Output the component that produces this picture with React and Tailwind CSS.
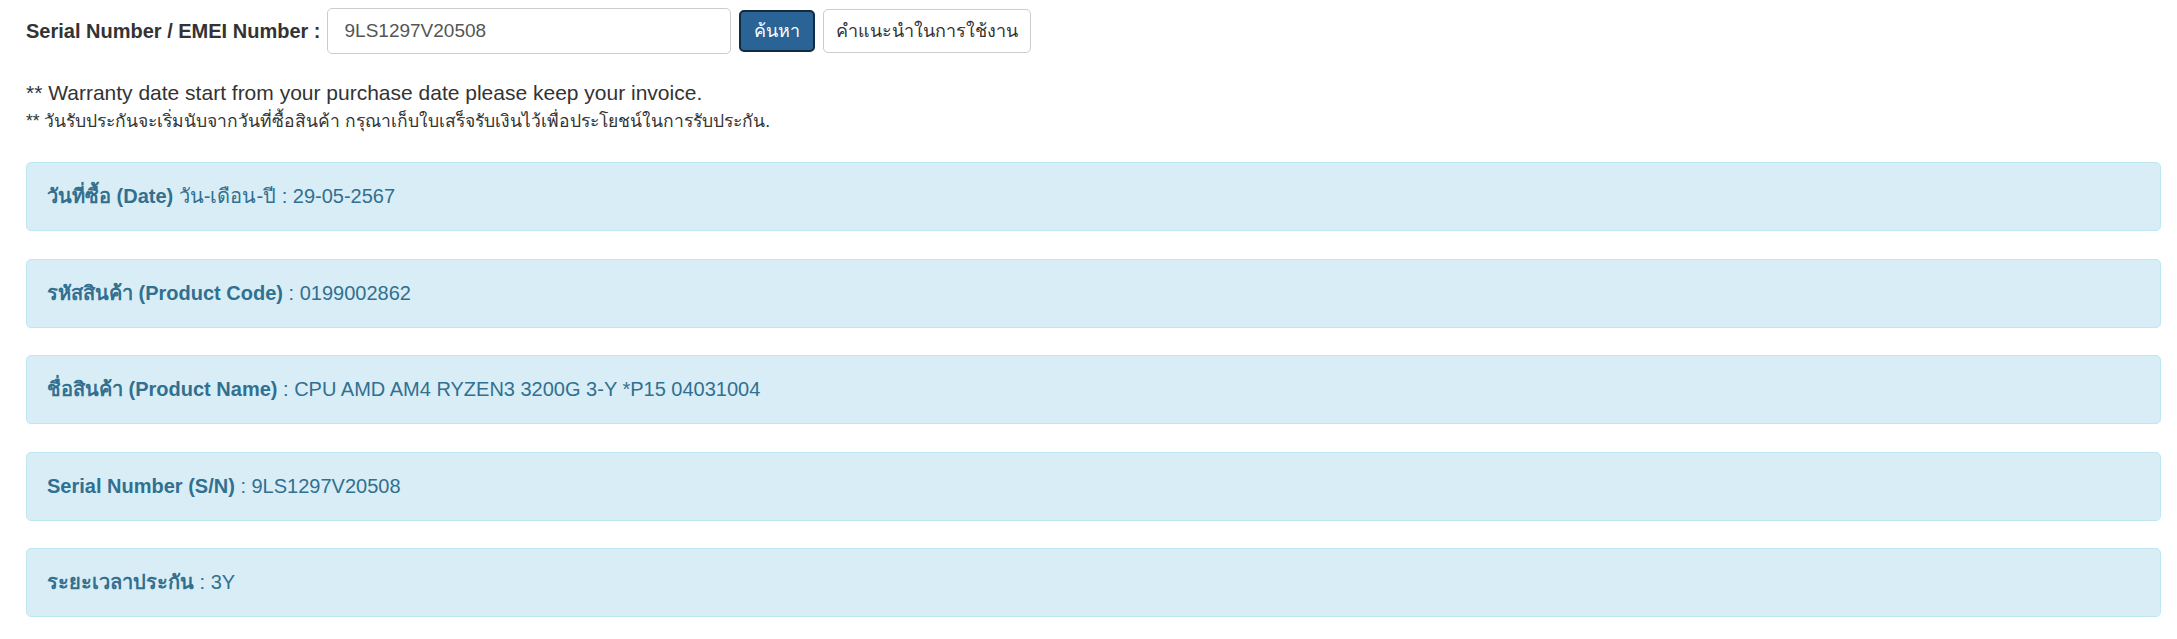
import React from 'react';

const rows = [
  { label: 'วันที่ซื้อ (Date)', extra: ' วัน-เดือน-ปี : ', value: '29-05-2567' },
  { label: 'รหัสสินค้า (Product Code)', extra: ' : ', value: '0199002862' },
  { label: 'ชื่อสินค้า (Product Name)', extra: ' : ', value: 'CPU AMD AM4 RYZEN3 3200G 3-Y *P15 04031004' },
  { label: 'Serial Number (S/N)', extra: ' : ', value: '9LS1297V20508' },
  { label: 'ระยะเวลาประกัน', extra: ' : ', value: '3Y' },
];

const App = () => {
  return (
    <div
      className="min-h-screen bg-white pl-[26px] pr-[16px] pt-[8px] text-[20px] leading-[27px] text-[#333]"
      style={{ fontFamily: '"Liberation Sans", "Noto Sans", sans-serif' }}
    >
      <div className="flex items-center">
        <label className="font-bold mr-[6px]">Serial Number / EMEI Number :</label>
        <input
          className="w-[404px] h-[46px] px-[17px] border border-[#ccc] rounded-[5px] text-[19px] text-[#555] outline-none"
          defaultValue="9LS1297V20508"
        />
        <button className="ml-[8px] h-[42px] px-[13px] bg-[#2a6496] border-2 border-[#122b40] rounded-[5px] text-white text-[18px]">
          ค้นหา
        </button>
        <button className="ml-[8px] h-[44px] px-[12px] bg-white border border-[#ccc] rounded-[5px] text-[#333] text-[18px]">
          คำแนะนำในการใช้งาน
        </button>
      </div>

      <div className="mt-[25px] leading-[28px]">
        <p className="text-[21px]">** Warranty date start from your purchase date please keep your invoice.</p>
        <p className="text-[17.5px]">** วันรับประกันจะเริ่มนับจากวันที่ซื้อสินค้า กรุณาเก็บใบเสร็จรับเงินไว้เพื่อประโยชน์ในการรับประกัน.</p>
      </div>

      <div className="mt-[27px] flex flex-col gap-[27.5px]">
        {rows.map((r) => (
          <div
            key={r.label}
            className="bg-[#d9edf7] border border-[#bce8f1] rounded-[5px] px-[20px] py-[20px] text-[#31708f]"
          >
            <span className="font-bold">{r.label}</span>
            {r.extra}
            {r.value}
          </div>
        ))}
      </div>
    </div>
  );
};

export default App;
